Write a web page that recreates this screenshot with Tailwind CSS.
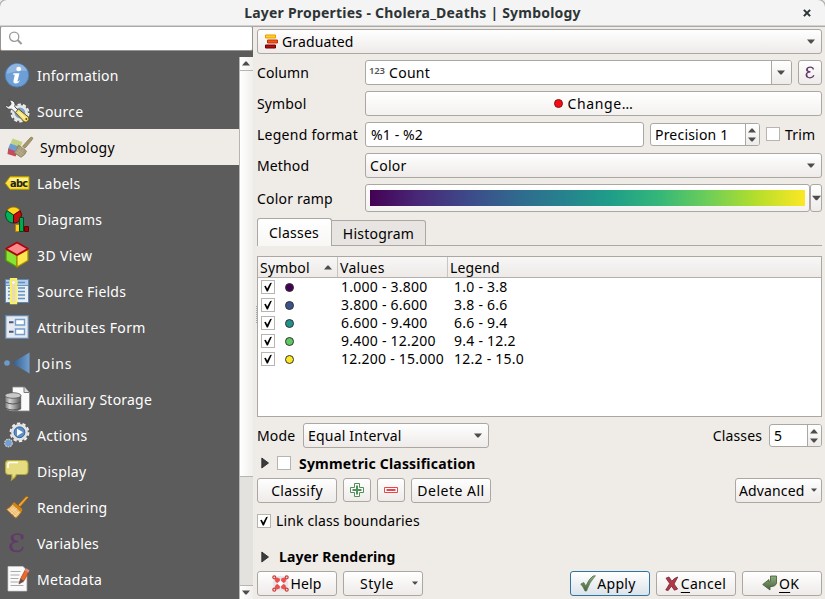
<!DOCTYPE html>
<html lang="en">
<head>
<meta charset="utf-8">
<title>Layer Properties</title>
<script src="https://cdn.jsdelivr.net/npm/@tailwindcss/browser@4"></script>
</head>
<body class="w-[825px] h-[599px] overflow-hidden bg-[#efebe7] font-['Noto_Sans',sans-serif] text-[14px] leading-[20px] tracking-[0.13px] text-black whitespace-nowrap">
<svg width="0" height="0" class="absolute">
  <defs>
    <linearGradient id="join"><stop offset="0" stop-color="#2d5a8c"/><stop offset="1" stop-color="#729fcf"/></linearGradient>
    <linearGradient id="metal"><stop offset="0" stop-color="#777"/><stop offset=".3" stop-color="#d5d5d5"/><stop offset="1" stop-color="#555"/></linearGradient>
    <linearGradient id="green" x2="0" y2="1"><stop offset="0" stop-color="#8fae7c"/><stop offset="1" stop-color="#47633d"/></linearGradient>
    <symbol id="down" viewBox="0 0 8 5"><path d="M0 .5h8L4.6 4.4h-1.2z" fill="#4d4d4d"/></symbol>
    <symbol id="up" viewBox="0 0 8 5"><path d="M0 4.5h8L4.6 .6h-1.2z" fill="#4d4d4d"/></symbol>
    <symbol id="check" viewBox="0 0 14 14"><path d="M3.2 6.2 4.8 5.7 6.2 8.6 9.2 3l1.7-.3L6.9 11.4H5.8z" fill="#000"/></symbol>
    <symbol id="expand" viewBox="0 0 8 12"><path d="M.8 1v10L7.5 6z" fill="#3c3c3c" stroke="#222" stroke-width=".8"/></symbol>
  </defs>
</svg>
<div class="flex flex-col w-[825px] h-[599px]">
  <header class="flex items-center h-[26px] bg-[#f4f4f4] border-b border-[#d5d1cd] rounded-t-[7px] shadow-[0_0_0_1px_#aaa] relative shrink-0">
    <h1 class="w-full text-center font-bold text-[#2e3436] text-[14px] tracking-[0.21px]">Layer Properties - Cholera_Deaths | Symbology</h1>
    <svg class="absolute left-[803px] top-[9px]" width="8" height="8" viewBox="0 0 9 9"><path d="M1 1l7 7M8 1 1 8" stroke="#2e3436" stroke-width="2.3"/></svg>
  </header>
  <div class="flex flex-1 min-h-0">
    <aside class="w-[253px] flex flex-col bg-[#5c5c5c] shrink-0 overflow-hidden">
      <div class="h-[25px] mb-[6px] bg-white border border-[#969390] rounded-[2px] shrink-0 pl-[8px] pt-[4px]">
        <svg width="14" height="14" viewBox="0 0 14 14" fill="none" stroke="#999"><circle cx="5.2" cy="5.7" r="4.6" stroke-width="1.3"/><path d="m8.6 9 4 4" stroke-width="1.9"/></svg>
      </div>
      <div class="flex flex-1 min-h-0">
        <nav class="w-[239px] text-white overflow-hidden shrink-0 tracking-[0.22px]">
          <div class="h-9 flex items-center"><svg class="mr-[5px]" width="32" height="32"><circle cx="17" cy="16.3" r="11.8" fill="#6d9fd6" stroke="#4b7db8"/><path d="M6.5 15a10.5 10.5 0 0 1 20.5-3q-10-1-20.5 3" fill="#8fb5df"/><ellipse cx="18.7" cy="10" rx="2.4" ry="2.2" fill="#fff"/><path d="M13.5 14.2h6l-2.100 8.200q.5.6 2.600-1.400-1.200 3.500-4.200 3.500-3 0-2.300-3l1.300-5.800h-1.800z" fill="#fff"/></svg><span class="pt-[2px]">Information</span></div>
          <div class="h-9 flex items-center"><svg class="mr-[5px]" width="32" height="32"><circle cx="20" cy="18" r="8.600" fill="none" stroke="#f1f1f1" stroke-width="1.800" stroke-dasharray="3.400 2"/><circle cx="20" cy="18" r="6.700" fill="#78a3d4" stroke="#e8e8e8" stroke-width="2.600"/><path d="M8.500 5.300q4-1 6 2 1.200 2.200.2 4.400l4.300 4.300-2.700 2.600-4.400-4.400q-3.500.7-5.800-1.700-.8-1-.8-2l3.500.9 2.300-2.200-.6-2.500z" fill="#f4f4f4" stroke="#444" stroke-width=".9"/><path d="m15.300 17.500 3.200-3.500 10.200 8.300.300 2.600-2.800 2.300-2-.4z" fill="#f3df79" stroke="#5d5010"/><path d="m18.500 17.300 6.500 6" stroke="#fff3b0" stroke-width="1.200"/><circle cx="26.300" cy="24" r="1" fill="#5d5010"/></svg><span class="pt-[2px]">Source</span></div>
          <div class="h-9 flex items-center bg-[#efebe7] text-black"><svg class="mr-[6px]" width="34" height="32"><path d="m12.500 7.500 10 3.500-2.500 6-9.500-4z" fill="#c3d282"/><path d="m10.200 12.500 9.800 3.500-2.500 6-9.500-4z" fill="#6d9cd0"/><path d="m8.200 17.500 9.300 3.500-2 4.500q-4-1.500-8-2.500z" fill="#c64b5c"/><path d="m22.500 15.300 8-8.800q1.600-.9 2.400.6.100 1-8 10.200z" fill="#a4976b" stroke="#82764d" stroke-width=".7"/><path d="m18.500 14 8 6q-1 4-5.500 6.300l-6.800-4.500q3-3 4.300-7.800" fill="#a79c78" stroke="#8a7f5b" stroke-width=".8"/><path d="m17 18.500 7 5m-8.500-3 6.800 4.500m-1-8.500-3.800 6.500m6-4.800-3.800 6.500" stroke="#c8bd9a" stroke-width=".5"/></svg><span class="pt-[2px]">Symbology</span></div>
          <div class="h-9 flex items-center"><svg class="mr-[5px]" width="32" height="32"><path d="M10 9.700h19v12.600H10l-4.700-6z" fill="#fae13c" stroke="#b79a00"/><path d="M10.500 11H28v3H8.500z" fill="#fff08a"/><text x="10" y="19.700" font-size="9.800" font-weight="bold" font-family="DejaVu Sans" letter-spacing="-0.700" fill="#222">abc</text></svg><span class="pt-[2px]">Labels</span></div>
          <div class="h-9 flex items-center"><svg class="mr-[5px]" width="32" height="32" stroke-width=".9"><path d="M13.500 12 6.800 7.600A8 8 0 0 1 20.200 7.600z" fill="#ffd51e" stroke="#9d6a00"/><path d="M13.500 12 6.800 7.600A8 8 0 0 0 13.500 20z" fill="#00b35a" stroke="#00421d"/><path d="M13.500 12 20.200 7.600A8 8 0 0 1 13.500 20z" fill="#c40d0d" stroke="#550000"/><path d="M15.500 21.500h4v7h-4z" fill="#ffcf1f" stroke="#b57900"/><path d="M19.500 14.500h4v14h-4z" fill="#00a850" stroke="#00421d"/><path d="M24.500 23.500h4v5h-4z" fill="#a40000" stroke="#550000"/></svg><span class="pt-[2px]">Diagrams</span></div>
          <div class="h-9 flex items-center"><svg class="mr-[5px]" width="32" height="32" stroke-linejoin="round"><path d="M6 10.500 17 16.500v11.500L6 21.500z" fill="#8ae234" stroke="#4e9a06" stroke-width="1.300"/><path d="M28 10.500 17 16.500v11.500l11-6.500z" fill="#fce94f" stroke="#a98a00" stroke-width="1.300"/><path d="M17 3.500 28 9.800 17 16 6 9.800z" fill="#f88a8a" stroke="#b3000f" stroke-width="1.600"/></svg><span class="pt-[2px] tracking-[0.4px]">3D View</span></div>
          <div class="h-9 flex items-center"><svg class="mr-[5px]" width="32" height="32"><path d="M5.500 4.500h23v23h-23z" fill="#e9eef3" stroke="#5d87b8"/><path d="M6 5h22v5H6z" fill="#b5cee8"/><path d="M6 7.500h3m9 0h7M8 13h2m8 0h7M8 16.500h2m8 0h7M8 20h2m8 0h7M8 23.500h2m8 0h7" stroke="#6290c4" stroke-width="1.300"/><path d="M6 10.500h22" stroke="#6d98c8"/><path d="M10.800 3.800h5.500v24.500h-5.500z" fill="#e8ddb6" stroke="#fbf457" stroke-width="1.800"/><circle cx="13.500" cy="7.500" r="1.300" fill="#fff"/></svg><span class="pt-[2px]">Source Fields</span></div>
          <div class="h-9 flex items-center"><svg class="mr-[5px]" width="32" height="32"><path d="M5.700 4.700h22.600v22.600H5.700z" fill="#e6e9ed" stroke="#6289b6" stroke-width="1.300"/><path d="M15.500 8.500h9v5.500h-9zM15.500 18h9v5.500h-9z" fill="#fff" stroke="#739fcf" stroke-width="1.400"/><path d="M9 11.300h4.500M9 20.700h4.500" stroke="#46597a" stroke-width="2"/></svg><span class="pt-[2px] tracking-[0.34px]">Attributes Form</span></div>
          <div class="h-9 flex items-center"><svg class="mr-[5px]" width="32" height="32"><circle cx="7" cy="16" r="2.800" fill="#6e9acb"/><path d="M12 16 29.500 5.500v21z" fill="url(#join)"/></svg><span class="pt-[2px] tracking-[0.800px]">Joins</span></div>
          <div class="h-9 flex items-center"><svg class="mr-[5px]" width="32" height="32"><path d="M12.500 4h12l5 5.500V28h-17z" fill="#fafafa" stroke="#858585" stroke-width=".8"/><path d="M24 4v5.500h5" fill="#ddd" stroke="#777"/><path d="M5 12.500v13.500q8 4.500 15.800 0V12.500z" fill="url(#metal)" stroke="#555" stroke-width=".6"/><path d="M5 19q8 4 15.800 0M5 25q8 4 15.800 0" fill="none" stroke="#555"/><ellipse cx="13" cy="12.500" rx="8" ry="2.800" fill="#c9c9c9" stroke="#555" stroke-width=".8"/></svg><span class="pt-[2px]">Auxiliary Storage</span></div>
          <div class="h-9 flex items-center"><svg class="mr-[5px]" width="32" height="32"><circle cx="19.500" cy="13.300" r="8.900" fill="none" stroke="#eee" stroke-width="2" stroke-dasharray="3.300 2.290"/><circle cx="19.500" cy="13.300" r="7" fill="#729fcf" stroke="#e3e3e3" stroke-width="2.800"/><circle cx="19.500" cy="13.300" r="5.400" fill="#5c8fc6" stroke="#35679f"/><path d="M17 9.700v7.200l6-3.600z" fill="#fff"/><circle cx="8.500" cy="24" r="3.800" fill="#729fcf" stroke="#ccc" stroke-width="1.200" stroke-dasharray="1.700 .8"/></svg><span class="pt-[2px] tracking-[0.350px]">Actions</span></div>
          <div class="h-9 flex items-center"><svg class="mr-[5px]" width="32" height="32"><path d="M8.500 5.500h16q3.500 0 3.500 3.500v7q0 3.500-3.500 3.500H16.500q-1 3-5 5.500 1-3 .2-5.500H8.500Q5.500 19.500 5.500 16V9q0-3.500 3-3.500z" fill="#e5dc82" stroke="#b7a736" stroke-width="1.100"/><path d="M8 13V9.500Q8 7.500 10 7.500h8" fill="none" stroke="#fff" stroke-width="1.500"/></svg><span class="pt-[2px]">Display</span></div>
          <div class="h-9 flex items-center"><svg class="mr-[5px]" width="32" height="32"><path d="m18 14 8-8.500q1.800-.8 2.300 1L20 16z" fill="#eba43b" stroke="#9c5c00" stroke-width=".8"/><path d="m14 11.500 8 6.500q.7 3-6 9.300L6.500 18.500Q10 16.500 14 11.500z" fill="#edbd72" stroke="#a9690d" stroke-width=".9"/><path d="m14 11.500 8 6.500-1.500 3-8-7.500z" fill="#cf8119"/><path d="m8 18.500 8 7m-6-8.500 7.500 7M11.500 16l6.500 6m-1-5-6 6m4-7-5 5m9 0-5 5" stroke="#fae0b6" stroke-width=".6"/></svg><span class="pt-[2px]">Rendering</span></div>
          <div class="h-9 flex items-center"><svg class="mr-[5px]" width="32" height="32" fill="none" stroke="#613a6b" stroke-linecap="round"><path d="M22.500 10Q21.500 7 17.500 7q-5 0-5.500 3.800.2 3.700 6.200 3.700Q10.500 15 10.500 20q.9 4.300 6.300 4.400 5 0 6-3.800" stroke-width="1.700"/><path d="M12.300 9.500q-.8 3 1.500 4.300M11 18q-1 3 1.500 5" stroke-width="2.800"/><path d="M22 9v2" stroke-width="2.800"/></svg><span class="pt-[2px]">Variables</span></div>
          <div class="h-9 flex items-center"><svg class="mr-[5px]" width="32" height="32"><path d="M8 3.500h15l3.800 4V28H8z" fill="#fafafa" stroke="#ccc" stroke-width=".7"/><path d="M10.500 8.500h10M10.500 12h9M10.500 15.500h8M10.500 19h13M10.500 22.500h13" stroke="#aaa" stroke-width="1.200"/><path d="m19 21 1.500-5.200 5.200-9.800 3.500 2-5.200 9.800z" fill="#e86b2c" stroke="#a63b0f" stroke-width=".7"/><path d="m19 21 1.500-5.200 3.500 2z" fill="#555"/><path d="m24.800 7.500 3.600 2 1.200-2.300-3.600-2z" fill="#d4928b"/></svg><span class="pt-[2px] tracking-[0.3px]">Metadata</span></div>
        </nav>
        <div class="w-[14px] flex flex-col border-l border-[#b8b4b0] bg-gradient-to-r from-white to-[#f1efed]">
          <div class="h-[14px] border-b border-[#b8b4b0] flex items-center justify-center shrink-0"><svg class="-ml-px" width="8" height="5"><use href="#up"/></svg></div>
          <div class="h-[405px] shrink-0"></div>
          <div class="h-[110px] shrink-0 bg-[#e3e2df] border-y border-[#b8b4b0]"></div>
          <div class="h-[13px] flex items-start pt-[4px] justify-center"><svg class="-ml-px" width="8" height="5"><use href="#down"/></svg></div>
        </div>
      </div>
    </aside>
    <div class="w-[4px] flex items-center shrink-0"><div class="w-[2px] h-[17px] ml-[2px] mt-[3px] border-r border-dotted border-[#aaa]"></div></div>
    <main class="w-[565px] flex flex-col pt-[3px]">
      <div class="h-[25px] shrink-0 flex items-center border border-[#aba7a3] rounded-[3px] bg-gradient-to-b from-white to-[#eeebe9] pl-[7px] pr-[6px]">
        <svg class="mr-[3px]" width="14" height="15" viewBox="0 0 14 15"><path d="M.5 1h10v3H.5z" fill="#ffd21e" stroke="#e99d00"/><path d="M2.500 6h10v3h-10z" fill="#f4511e" stroke="#bd3600"/><path d="M.5 11h10v3H.5z" fill="#b50d0d" stroke="#6b0000"/></svg>
        <span>Graduated</span><svg class="ml-auto" width="8" height="5"><use href="#down"/></svg>
      </div>
      <div class="h-[25px] mt-[6px] shrink-0 flex items-center">
        <span class="w-[108px]">Column</span>
        <div class="w-[427px] h-[25px] flex items-center border border-[#aba7a3] rounded-[3px] bg-white overflow-hidden pl-[3px]"><span class="text-[9.500px] font-semibold text-[#555] w-[20px] -mt-[3px] tracking-[-0.200px]">123</span><span class="tracking-[0.300px]">Count</span><span class="ml-auto w-[20px] h-full border-l border-[#aba7a3] bg-gradient-to-b from-white to-[#eeebe9] flex items-center pl-[5px]"><svg width="8" height="5"><use href="#down"/></svg></span></div>
        <div class="ml-[6px] w-[24px] h-[25px] border border-[#aba7a3] rounded-[3px] bg-gradient-to-b from-white to-[#eeebe9] flex items-center justify-center"><svg class="-mt-px" width="10" height="13" viewBox="0 0 10 13" fill="none" stroke="#613a6b" stroke-width="1.200"><path d="M8.500 3.500Q8 1.200 5.300 1.200 2.200 1.200 2 3.500 2.200 5.800 5.500 5.900 1.400 6 1.300 9q.4 2.800 3.700 2.800 3.200 0 3.900-2.600"/><path d="M2.200 2.500q-.8 1.600.4 2.800M1.600 8q-.5 1.800.8 3" stroke-width="1.600"/></svg></div>
      </div>
      <div class="h-[25px] mt-[6px] shrink-0 flex items-center">
        <span class="w-[108px]">Symbol</span>
        <div class="flex-1 h-[25px] border border-[#aba7a3] rounded-[3px] bg-gradient-to-b from-white to-[#f4f2f0] flex items-center justify-center tracking-[0.6px]"><span class="w-[9px] h-[9px] rounded-full bg-[#f80b12] border border-[#7c1a1c] mr-[5px] -mt-[1px]"></span>Change…</div>
      </div>
      <div class="h-[25px] mt-[6px] shrink-0 flex items-center">
        <span class="w-[108px] tracking-[0.25px]">Legend format</span>
        <div class="w-[279px] h-[25px] border border-[#aba7a3] rounded-[3px] bg-white flex items-center pl-[5px]">%1 - %2</div>
        <div class="ml-[6px] w-[110px] h-[23px] border border-[#aba7a3] rounded-[3px] bg-white flex items-center pl-[4px] overflow-hidden tracking-[0.2px]">Precision 1<span class="ml-auto w-[14px] h-full border-l border-[#aba7a3] bg-gradient-to-b from-white to-[#eeebe9] flex flex-col items-start pl-[2px] justify-center gap-[4px]"><svg width="8" height="5"><use href="#up"/></svg><svg width="8" height="5"><use href="#down"/></svg></span></div>
        <span class="ml-[6px] w-[14px] h-[14px] -mt-[2px] border border-[#b8b4b0] bg-white"></span><span class="ml-[5px] tracking-[0.200px]">Trim</span>
      </div>
      <div class="h-[25px] mt-[6px] shrink-0 flex items-center">
        <span class="w-[108px]">Method</span>
        <div class="flex-1 h-[25px] border border-[#aba7a3] rounded-[3px] bg-gradient-to-b from-white to-[#eeebe9] flex items-center justify-between pl-[4px] pr-[6px]"><span class="tracking-[0.300px]">Color</span><svg width="8" height="5"><use href="#down"/></svg></div>
      </div>
      <div class="h-[28px] mt-[6px] shrink-0 flex items-center">
        <span class="w-[108px] pt-[2px] tracking-[0.2px]">Color ramp</span>
        <div class="w-[445px] h-[28px] border border-[#aba7a3] rounded-[3px] bg-gradient-to-b from-white to-[#f4f2f0] px-[4px] py-[5px]"><div class="h-[16px] bg-[linear-gradient(to_right,#440154,#482878,#3e4989,#31688e,#26828e,#1f9e89,#35b779,#6ece58,#b5de2b,#fde725)]"></div></div>
        <div class="w-[12px] h-[28px] border border-[#aba7a3] rounded-[3px] bg-gradient-to-b from-white to-[#eeebe9] flex items-center justify-center"><svg class="shrink-0" width="9" height="6"><use href="#down"/></svg></div>
      </div>
      <div class="h-[28px] mt-[6px] shrink-0 flex items-end">
        <div class="w-[75px] h-[28px] border border-b-0 border-[#aba7a3] rounded-t-[3px] bg-gradient-to-b from-white to-[#f8f7f6] flex items-center justify-center pr-[1px] tracking-[0.250px]">Classes</div>
        <div class="w-[94px] h-[26px] border border-l-0 border-[#aba7a3] rounded-tr-[3px] bg-[#e8e4e1] flex items-center justify-center pt-[2px] tracking-[0.220px]">Histogram</div>
        <div class="flex-1 h-px bg-[#aba7a3]"></div>
      </div>
      <div class="h-[161px] mt-[10px] shrink-0 border border-[#aba7a3] bg-white">
        <div class="h-[21px] flex items-center border-b border-[#b3afab] bg-gradient-to-b from-[#f8f7f6] to-[#edeae7]">
          <div class="w-[80px] h-full flex items-center justify-between pl-[2px] pr-[5px] border-r border-[#c9c5c1]"><span class="pt-[2px] tracking-[0.200px]">Symbol</span><svg width="8" height="5"><use href="#up"/></svg></div>
          <div class="w-[110px] h-full pl-[2px] pt-px border-r border-[#c9c5c1] tracking-[0.300px]">Values</div>
          <div class="pl-[2px] pt-[2px]">Legend</div>
        </div>
        <div class="h-[18px] flex items-center tracking-[0.25px]"><span class="ml-[3px] w-[14px] h-[14px] border border-[#b8b4b0]"><svg class="-m-px" width="14" height="14"><use href="#check"/></svg></span><span class="ml-[9.500px] w-[9px] h-[9px] rounded-full border border-[#333] bg-[#440154]"></span><span class="ml-[47.500px] w-[113px]">1.000 - 3.800</span><span>1.0 - 3.8</span></div>
        <div class="h-[18px] flex items-center tracking-[0.25px]"><span class="ml-[3px] w-[14px] h-[14px] border border-[#b8b4b0]"><svg class="-m-px" width="14" height="14"><use href="#check"/></svg></span><span class="ml-[9.500px] w-[9px] h-[9px] rounded-full border border-[#333] bg-[#3b528b]"></span><span class="ml-[47.500px] w-[113px]">3.800 - 6.600</span><span>3.8 - 6.6</span></div>
        <div class="h-[18px] flex items-center tracking-[0.25px]"><span class="ml-[3px] w-[14px] h-[14px] border border-[#b8b4b0]"><svg class="-m-px" width="14" height="14"><use href="#check"/></svg></span><span class="ml-[9.500px] w-[9px] h-[9px] rounded-full border border-[#333] bg-[#21918c]"></span><span class="ml-[47.500px] w-[113px]">6.600 - 9.400</span><span>6.6 - 9.4</span></div>
        <div class="h-[18px] flex items-center tracking-[0.25px]"><span class="ml-[3px] w-[14px] h-[14px] border border-[#b8b4b0]"><svg class="-m-px" width="14" height="14"><use href="#check"/></svg></span><span class="ml-[9.500px] w-[9px] h-[9px] rounded-full border border-[#333] bg-[#5ec962]"></span><span class="ml-[47.500px] w-[113px]">9.400 - 12.200</span><span>9.4 - 12.2</span></div>
        <div class="h-[18px] flex items-center tracking-[0.25px]"><span class="ml-[3px] w-[14px] h-[14px] border border-[#b8b4b0]"><svg class="-m-px" width="14" height="14"><use href="#check"/></svg></span><span class="ml-[9.500px] w-[9px] h-[9px] rounded-full border border-[#333] bg-[#fde725]"></span><span class="ml-[47.500px] w-[113px]">12.200 - 15.000</span><span>12.2 - 15.0</span></div>
      </div>
      <div class="h-[25px] mt-[6px] shrink-0 flex items-center">
        <span class="w-[46px]">Mode</span>
        <div class="w-[186px] h-[25px] border border-[#aba7a3] rounded-[3px] bg-gradient-to-b from-white to-[#eeebe9] flex items-center justify-between pl-[4px] pr-[6px] tracking-[0.2px]">Equal Interval<svg width="8" height="5"><use href="#down"/></svg></div>
        <span class="ml-auto mr-[7px]">Classes</span>
        <div class="w-[53px] h-[23px] border border-[#aba7a3] rounded-[3px] bg-white flex items-center pl-[4px] overflow-hidden">5<span class="ml-auto w-[14px] h-full border-l border-[#aba7a3] bg-gradient-to-b from-white to-[#eeebe9] flex flex-col items-start pl-[2px] justify-center gap-[4px]"><svg width="8" height="5"><use href="#up"/></svg><svg width="8" height="5"><use href="#down"/></svg></span></div>
      </div>
      <div class="h-[30px] shrink-0 flex items-center pl-[4px]"><svg width="8" height="12"><use href="#expand"/></svg><span class="ml-[8px] w-[14px] h-[14px] -mt-px border border-[#b8b4b0] bg-white"></span><span class="ml-[8px] pt-[2px] font-bold tracking-[0.2px]">Symmetric Classification</span></div>
      <div class="h-[25px] shrink-0 flex items-center gap-[6px]">
        <div class="w-[80px] h-[25px] border border-[#aba7a3] rounded-[3px] bg-gradient-to-b from-white to-[#eeebe9] flex items-center justify-center tracking-[0.300px]">Classify</div>
        <div class="w-[28px] h-[24px] mb-px border border-[#aba7a3] rounded-[3px] bg-gradient-to-b from-white to-[#eeebe9] flex items-center justify-center"><svg width="14" height="14" viewBox="0 0 14 14"><path d="M4.500 .5h5v4h4v5h-4v4h-5v-4h-4v-5h4z" fill="#fff" stroke="#4f9055"/><path d="M7 2.500v9M2.500 7h9" stroke="#4f9055" stroke-width="2"/></svg></div>
        <div class="w-[28px] h-[24px] mb-px border border-[#aba7a3] rounded-[3px] bg-gradient-to-b from-white to-[#eeebe9] flex items-center justify-center"><svg width="14" height="14" viewBox="0 0 14 14"><path d="M.5 4.500h13v5H.5z" fill="#fff" stroke="#e8464b"/><path d="M2.500 7h9" stroke="#e8464b" stroke-width="2"/></svg></div>
        <div class="w-[80px] h-[25px] border border-[#aba7a3] rounded-[3px] bg-gradient-to-b from-white to-[#eeebe9] flex items-center justify-center tracking-[0.500px]">Delete All</div>
        <div class="ml-auto w-[87px] h-[25px] border border-[#aba7a3] rounded-[3px] bg-gradient-to-b from-white to-[#eeebe9] flex items-center justify-between pl-[3px] pr-[4px]">Advanced<svg class="-mt-[2px]" width="6" height="4"><use href="#down"/></svg></div>
      </div>
      <div class="h-[36px] shrink-0 flex items-center"><span class="w-[14px] h-[14px] -mt-px border border-[#b8b4b0] bg-white"><svg class="-m-px" width="14" height="14"><use href="#check"/></svg></span><span class="ml-[5px] tracking-[0.14px]">Link class boundaries</span></div>
      <div class="h-[32px] pt-[4px] shrink-0 flex items-center pl-[4px]"><svg width="8" height="12"><use href="#expand"/></svg><span class="ml-[10px] font-bold tracking-[0.120px]">Layer Rendering</span></div>
      <div class="h-[25px] shrink-0 flex items-center">
        <div class="w-[80px] h-[25px] border border-[#aba7a3] rounded-[3px] bg-gradient-to-b from-white to-[#eeebe9] flex items-center justify-center"><svg class="mr-[1px]" width="17" height="17" viewBox="0 0 17 17"><circle cx="8.500" cy="8.500" r="5.500" fill="none" stroke="#e6e6e6" stroke-width="4.500"/><path d="m3 4.500 1.800-1.700 2.700 1v2.200L6 7.500 4 7zM14 4.500l-1.800-1.700-2.700 1v2.200L11 7.500l2-.5zM3 12.500l1.800 1.700 2.700-1V11L6 9.500l-2 .5zM14 12.500l-1.800 1.700-2.700-1V11L11 9.500l2 .5z" fill="#ee4e4e" stroke="#e24444" stroke-width=".6"/><circle cx="8.500" cy="8.500" r="2.200" fill="#fff"/><g fill="#f7dada" stroke="#c93c3c" stroke-width="1.200"><circle cx="2.300" cy="2.300" r="1.500"/><circle cx="14.700" cy="2.300" r="1.500"/><circle cx="2.300" cy="14.700" r="1.500"/><circle cx="14.700" cy="14.700" r="1.500"/></g></svg>Help</div>
        <div class="ml-[6px] w-[80px] h-[25px] border border-[#aba7a3] rounded-[3px] bg-gradient-to-b from-white to-[#eeebe9] flex items-center justify-between pl-[16px] pr-[4px] tracking-[0.500px]">Style<svg class="-mt-[2px]" width="6" height="4"><use href="#down"/></svg></div>
        <div class="ml-auto w-[80px] h-[25px] border border-[#2b76a3] rounded-[3px] bg-gradient-to-b from-white to-[#dce3e9] flex items-center justify-center pr-[4px]"><svg class="mr-[1px]" width="16" height="17" viewBox="0 0 16 17"><path d="m.8 9 3-1.500 2 3.700Q9 3.500 13 1l2.400-.3Q9.500 7 6.500 16H5Q3.500 12 .8 9z" fill="url(#green)" stroke="#4f6e45" stroke-width=".7"/></svg><span class="tracking-[0.3px]">Apply</span></div>
        <div class="ml-[6px] w-[80px] h-[25px] border border-[#aba7a3] rounded-[3px] bg-gradient-to-b from-white to-[#eeebe9] flex items-center justify-center pr-px"><svg class="mr-[2px]" width="14" height="16" viewBox="0 0 14 16"><path d="M1 2.200 4 1l2.800 4.200Q9 2 12.800 1L9 8l3.600 5-3.200 1.200L6.500 10 3.200 14.500.8 14 4.700 7.500z" fill="#b23a48" stroke="#742231" stroke-width=".8"/></svg><span class="tracking-[0.3px]"><span class="underline underline-offset-[3px]">C</span>ancel</span></div>
        <div class="ml-[6px] w-[80px] h-[25px] border border-[#aba7a3] rounded-[3px] bg-gradient-to-b from-white to-[#eeebe9] flex items-center justify-center pr-[3px]"><svg class="mr-[1px]" width="16" height="17" viewBox="0 0 16 17"><path d="M8.500 1h6v7q-.5 3.500-6.500 3.700V15L.7 9.500 7 4.500V7q2 0 1.500-2z" fill="url(#green)" stroke="#3f5636" stroke-width=".8"/></svg><span><span class="underline underline-offset-[3px]">O</span>K</span></div>
      </div>
    </main>
  </div>
</div>
</body>
</html>
